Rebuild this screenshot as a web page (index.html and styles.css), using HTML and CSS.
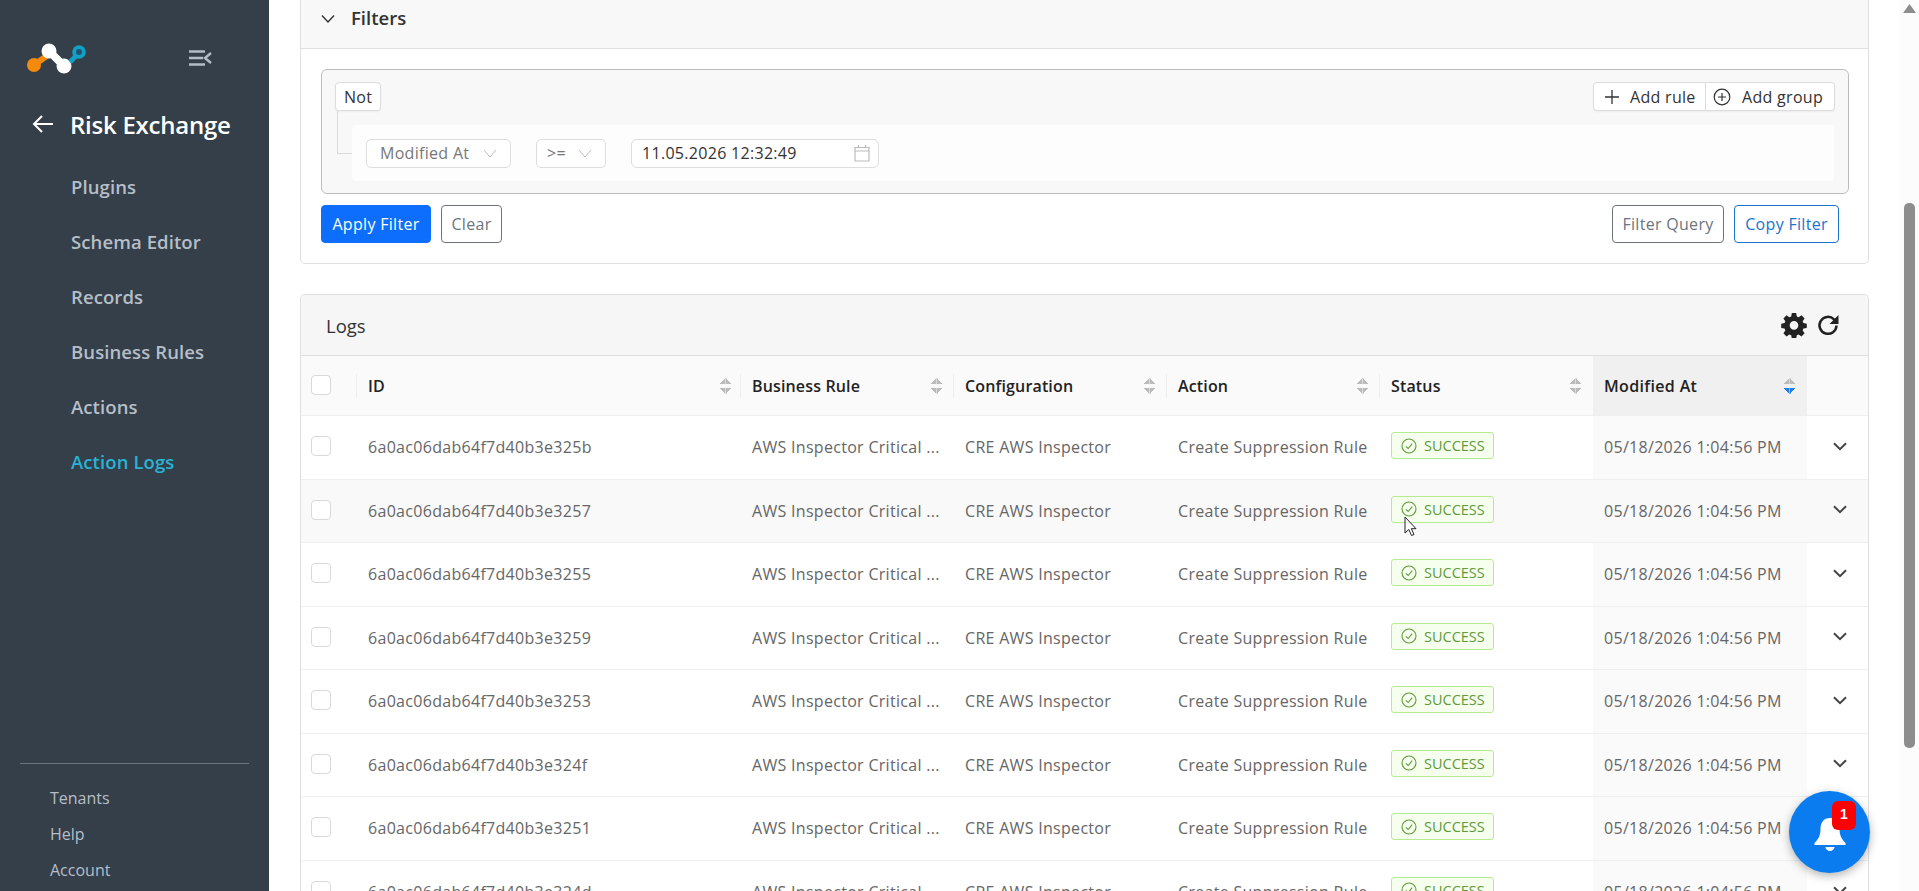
FILE: index.html
```html
<!DOCTYPE html>
<html lang="en">
<head>
<meta charset="utf-8">
<title>Risk Exchange - Action Logs</title>
<link rel="stylesheet" href="styles.css">
</head>
<body>
<div class="app">
  <aside class="sidebar">
    <div class="brand">
      <svg class="logo" width="62" height="36" viewBox="0 0 62 36">
        <path d="M8 25 L22 15" stroke="#f58a0b" stroke-width="6" fill="none"/>
        <circle cx="8" cy="25" r="7" fill="#f58a0b"/>
        <path d="M23 11 L38 26" stroke="#fff" stroke-width="8" fill="none"/>
        <circle cx="23" cy="11" r="7.500" fill="#fff"/>
        <circle cx="38" cy="26" r="7.500" fill="#fff"/>
        <path d="M44 22 L50 16" stroke="#12a0c4" stroke-width="5" fill="none"/>
        <circle cx="53" cy="12" r="6.800" fill="#12a0c4"/>
        <circle cx="53" cy="12" r="3" fill="#1c5474"/>
      </svg>
      <svg class="collapse" width="24" height="18" viewBox="0 0 24 18">
        <path d="M1 2.500H17M1 9H15M1 15.500H17" stroke="#b4bcc6" stroke-width="2.400" fill="none"/>
        <path d="M23 4 L17 9 L23 14" stroke="#b4bcc6" stroke-width="2.400" fill="none"/>
      </svg>
    </div>
    <div class="module">
      <svg width="22" height="20" viewBox="0 0 22 20"><path d="M21 10H2M10 2 L2 10 L10 18" stroke="#fff" stroke-width="2" fill="none"/></svg>
      <span class="module-name">Risk Exchange</span>
    </div>
    <nav class="nav">
      <a class="nav-item">Plugins</a>
      <a class="nav-item">Schema Editor</a>
      <a class="nav-item">Records</a>
      <a class="nav-item">Business Rules</a>
      <a class="nav-item">Actions</a>
      <a class="nav-item active">Action Logs</a>
    </nav>
    <div class="side-foot">
      <a class="foot-item">Tenants</a>
      <a class="foot-item">Help</a>
      <a class="foot-item">Account</a>
    </div>
  </aside>

  <main class="main">
    <section class="card filters">
      <header class="filters-head">
        <svg width="14" height="10" viewBox="0 0 14 10"><path d="M1 1.500 L7 8 L13 1.500" stroke="#333" stroke-width="1.400" fill="none"/></svg>
        <span class="filters-title">Filters</span>
      </header>
      <div class="filters-body">
        <div class="group">
          <div class="group-top">
            <button class="qb-btn">Not</button>
            <div class="qb-actions">
              <button class="qb-btn add-rule">
                <svg width="16" height="16" viewBox="0 0 16 16"><path d="M8 1V15M1 8H15" stroke="#333" stroke-width="1.300"/></svg>Add rule</button>
              <button class="qb-btn add-group">
                <svg width="18" height="18" viewBox="0 0 18 18"><circle cx="9" cy="9" r="7.800" fill="none" stroke="#333" stroke-width="1.200"/><path d="M9 5V13M5 9H13" stroke="#333" stroke-width="1.200"/></svg>Add group</button>
            </div>
          </div>
          <div class="rule">
            <div class="field field-name"><span>Modified At</span><svg width="14" height="9" viewBox="0 0 14 9"><path d="M1 1 L7 8 L13 1" stroke="#bbb" stroke-width="1" fill="none"/></svg></div>
            <div class="field field-op"><span>&gt;=</span><svg width="14" height="9" viewBox="0 0 14 9"><path d="M1 1 L7 8 L13 1" stroke="#bbb" stroke-width="1" fill="none"/></svg></div>
            <div class="field field-date"><span>11.05.2026 12:32:49</span><svg width="16" height="18" viewBox="0 0 16 18"><path d="M1 3.500H15V17H1ZM1 7H15M4.500 1V4M11.500 1V4" stroke="#bbb" stroke-width="1.200" fill="none"/></svg></div>
          </div>
        </div>
        <div class="filter-actions">
          <button class="btn btn-primary">Apply Filter</button>
          <button class="btn btn-clear">Clear</button>
          <span class="spacer"></span>
          <button class="btn btn-query">Filter Query</button>
          <button class="btn btn-copy">Copy Filter</button>
        </div>
      </div>
    </section>

    <section class="card logs">
      <header class="logs-head">
        <span class="logs-title">Logs</span>
        <svg class="gear" width="26" height="26" viewBox="0 0 24 24"><path fill="#222" fill-rule="evenodd" d="M10 1h4l.6 3.100 1.700.7 2.600-1.800 2.900 2.900-1.800 2.600.7 1.700L23.800 10.800v3.900l-3.100.6-.7 1.700 1.800 2.600-2.900 2.900-2.600-1.800-1.700.7-.6 3.100h-4l-.6-3.100-1.700-.7-2.600 1.800-2.900-2.900 1.800-2.600-.7-1.700-3.100-.6v-3.900l3.100-.6.700-1.700-1.800-2.600 2.900-2.900 2.600 1.800 1.700-.7zM12 8.300a4 4 0 1 0 0 8 4 4 0 0 0 0-8z"/></svg>
        <svg class="refresh" width="24" height="24" viewBox="0 0 24 24"><path d="M20.500 12.500a8.500 8.500 0 1 1-2.500-6.200L20.500 9" fill="none" stroke="#222" stroke-width="2.500"/><path d="M22.500 2v9h-9z" fill="#222"/></svg>
      </header>
      <table class="table">
        <colgroup>
          <col class="c-check"><col class="c-id"><col class="c-mid"><col class="c-mid"><col class="c-mid"><col class="c-mid"><col class="c-mod"><col>
        </colgroup>
        <thead>
          <tr>
            <th class="check-cell"><span class="check"></span></th>
            <th class="sep"><div class="th-in">ID<i class="sort"></i></div></th>
            <th class="sep"><div class="th-in">Business Rule<i class="sort"></i></div></th>
            <th class="sep"><div class="th-in">Configuration<i class="sort"></i></div></th>
            <th class="sep"><div class="th-in">Action<i class="sort"></i></div></th>
            <th><div class="th-in">Status<i class="sort"></i></div></th>
            <th class="mod-head"><div class="th-in">Modified At<i class="sort desc"></i></div></th>
            <th></th>
          </tr>
        </thead>
        <tbody>
          <tr><td class="check-cell"><span class="check"></span></td><td>6a0ac06dab64f7d40b3e325b</td><td>AWS Inspector Critical ...</td><td>CRE AWS Inspector</td><td>Create Suppression Rule</td><td><span class="badge"><svg width="16" height="16" viewBox="0 0 16 16"><circle cx="8" cy="8" r="7" fill="none" stroke="#5f9a3a" stroke-width="1.100"/><path d="M4.800 8.300 L7.200 10.500 L11.200 5.700" fill="none" stroke="#5f9a3a" stroke-width="1.100"/></svg>SUCCESS</span></td><td class="mod">05/18/2026 1:04:56 PM</td><td class="exp"><svg class="chev" width="14" height="9" viewBox="0 0 14 9"><path d="M1 1.200 L7 7.200 L13 1.200" stroke="#444" stroke-width="2" fill="none"/></svg></td></tr>
          <tr class="hover"><td class="check-cell"><span class="check"></span></td><td>6a0ac06dab64f7d40b3e3257</td><td>AWS Inspector Critical ...</td><td>CRE AWS Inspector</td><td>Create Suppression Rule</td><td><span class="badge"><svg width="16" height="16" viewBox="0 0 16 16"><circle cx="8" cy="8" r="7" fill="none" stroke="#5f9a3a" stroke-width="1.100"/><path d="M4.800 8.300 L7.200 10.500 L11.200 5.700" fill="none" stroke="#5f9a3a" stroke-width="1.100"/></svg>SUCCESS</span></td><td class="mod">05/18/2026 1:04:56 PM</td><td class="exp"><svg class="chev" width="14" height="9" viewBox="0 0 14 9"><path d="M1 1.200 L7 7.200 L13 1.200" stroke="#444" stroke-width="2" fill="none"/></svg></td></tr>
          <tr><td class="check-cell"><span class="check"></span></td><td>6a0ac06dab64f7d40b3e3255</td><td>AWS Inspector Critical ...</td><td>CRE AWS Inspector</td><td>Create Suppression Rule</td><td><span class="badge"><svg width="16" height="16" viewBox="0 0 16 16"><circle cx="8" cy="8" r="7" fill="none" stroke="#5f9a3a" stroke-width="1.100"/><path d="M4.800 8.300 L7.200 10.500 L11.200 5.700" fill="none" stroke="#5f9a3a" stroke-width="1.100"/></svg>SUCCESS</span></td><td class="mod">05/18/2026 1:04:56 PM</td><td class="exp"><svg class="chev" width="14" height="9" viewBox="0 0 14 9"><path d="M1 1.200 L7 7.200 L13 1.200" stroke="#444" stroke-width="2" fill="none"/></svg></td></tr>
          <tr><td class="check-cell"><span class="check"></span></td><td>6a0ac06dab64f7d40b3e3259</td><td>AWS Inspector Critical ...</td><td>CRE AWS Inspector</td><td>Create Suppression Rule</td><td><span class="badge"><svg width="16" height="16" viewBox="0 0 16 16"><circle cx="8" cy="8" r="7" fill="none" stroke="#5f9a3a" stroke-width="1.100"/><path d="M4.800 8.300 L7.200 10.500 L11.200 5.700" fill="none" stroke="#5f9a3a" stroke-width="1.100"/></svg>SUCCESS</span></td><td class="mod">05/18/2026 1:04:56 PM</td><td class="exp"><svg class="chev" width="14" height="9" viewBox="0 0 14 9"><path d="M1 1.200 L7 7.200 L13 1.200" stroke="#444" stroke-width="2" fill="none"/></svg></td></tr>
          <tr><td class="check-cell"><span class="check"></span></td><td>6a0ac06dab64f7d40b3e3253</td><td>AWS Inspector Critical ...</td><td>CRE AWS Inspector</td><td>Create Suppression Rule</td><td><span class="badge"><svg width="16" height="16" viewBox="0 0 16 16"><circle cx="8" cy="8" r="7" fill="none" stroke="#5f9a3a" stroke-width="1.100"/><path d="M4.800 8.300 L7.200 10.500 L11.200 5.700" fill="none" stroke="#5f9a3a" stroke-width="1.100"/></svg>SUCCESS</span></td><td class="mod">05/18/2026 1:04:56 PM</td><td class="exp"><svg class="chev" width="14" height="9" viewBox="0 0 14 9"><path d="M1 1.200 L7 7.200 L13 1.200" stroke="#444" stroke-width="2" fill="none"/></svg></td></tr>
          <tr><td class="check-cell"><span class="check"></span></td><td>6a0ac06dab64f7d40b3e324f</td><td>AWS Inspector Critical ...</td><td>CRE AWS Inspector</td><td>Create Suppression Rule</td><td><span class="badge"><svg width="16" height="16" viewBox="0 0 16 16"><circle cx="8" cy="8" r="7" fill="none" stroke="#5f9a3a" stroke-width="1.100"/><path d="M4.800 8.300 L7.200 10.500 L11.200 5.700" fill="none" stroke="#5f9a3a" stroke-width="1.100"/></svg>SUCCESS</span></td><td class="mod">05/18/2026 1:04:56 PM</td><td class="exp"><svg class="chev" width="14" height="9" viewBox="0 0 14 9"><path d="M1 1.200 L7 7.200 L13 1.200" stroke="#444" stroke-width="2" fill="none"/></svg></td></tr>
          <tr><td class="check-cell"><span class="check"></span></td><td>6a0ac06dab64f7d40b3e3251</td><td>AWS Inspector Critical ...</td><td>CRE AWS Inspector</td><td>Create Suppression Rule</td><td><span class="badge"><svg width="16" height="16" viewBox="0 0 16 16"><circle cx="8" cy="8" r="7" fill="none" stroke="#5f9a3a" stroke-width="1.100"/><path d="M4.800 8.300 L7.200 10.500 L11.200 5.700" fill="none" stroke="#5f9a3a" stroke-width="1.100"/></svg>SUCCESS</span></td><td class="mod">05/18/2026 1:04:56 PM</td><td class="exp"><svg class="chev" width="14" height="9" viewBox="0 0 14 9"><path d="M1 1.200 L7 7.200 L13 1.200" stroke="#444" stroke-width="2" fill="none"/></svg></td></tr>
          <tr><td class="check-cell"><span class="check"></span></td><td>6a0ac06dab64f7d40b3e324d</td><td>AWS Inspector Critical ...</td><td>CRE AWS Inspector</td><td>Create Suppression Rule</td><td><span class="badge"><svg width="16" height="16" viewBox="0 0 16 16"><circle cx="8" cy="8" r="7" fill="none" stroke="#5f9a3a" stroke-width="1.100"/><path d="M4.800 8.300 L7.200 10.500 L11.200 5.700" fill="none" stroke="#5f9a3a" stroke-width="1.100"/></svg>SUCCESS</span></td><td class="mod">05/18/2026 1:04:56 PM</td><td class="exp"><svg class="chev" width="14" height="9" viewBox="0 0 14 9"><path d="M1 1.200 L7 7.200 L13 1.200" stroke="#444" stroke-width="2" fill="none"/></svg></td></tr>
        </tbody>
      </table>
    </section>
  </main>

  <div class="scrollbar">
    <svg class="sb-arrow" width="13" height="9" viewBox="0 0 13 9"><path d="M6.500 0 L13 9 H0Z" fill="#8d8d8d"/></svg>
    <div class="sb-thumb"></div>
  </div>
</div>

<button class="fab">
  <svg width="34" height="36" viewBox="0 0 34 36"><path fill="#fff" d="M17 2c-6.500 0-9.500 5-9.500 10.500 0 7-2 10.500-6 14.500v2h31v-2c-4-4-6-7.500-6-14.500C26.500 7 23.500 2 17 2zM12.500 31a4.500 4 0 0 0 9 0z"/></svg>
  <span class="fab-badge">1</span>
</button>
<svg class="cursor" width="13" height="21" viewBox="0 0 13 21"><path d="M1 1V17L4.800 13.500L7.500 19.500L10 18.500L7.300 12.700H12Z" fill="#fff" stroke="#222" stroke-width="1"/></svg>
</body>
</html>
```
FILE: styles.css
```css
* { box-sizing: border-box; }
html, body { margin: 0; height: 891px; overflow: hidden; background: #fff; }
body { font-family: "Open Sans", "Noto Sans", sans-serif; font-size: 16px; letter-spacing: 0.3px; color: #333; position: relative; }
button { font: inherit; letter-spacing: inherit; cursor: pointer; }

.app { display: flex; height: 891px; overflow: hidden; }

/* sidebar */
.sidebar { width: 269px; flex: none; background: #343f49; display: flex; flex-direction: column; color: #b6bec8; }
.brand { display: flex; align-items: center; justify-content: space-between; padding: 40px 57px 0 26px; height: 76px; }
.module { display: flex; align-items: center; gap: 16px; padding: 22px 0 0 32px; height: 52px; box-sizing: content-box; }
.module-name { font-size: 24px; font-weight: 600; color: #fff; letter-spacing: -0.25px; }
.nav { display: flex; flex-direction: column; padding: 9px 0 0 71px; }
.nav-item { height: 55px; line-height: 55px; font-size: 18.500px; font-weight: 600; letter-spacing: 0.1px; }
.nav-item.active { color: #29b3d4; }
.side-foot { margin: auto 20px 0; border-top: 1px solid #6c757e; padding: 16px 0 4px 30px; display: flex; flex-direction: column; height: 128px; }
.foot-item { height: 36px; line-height: 36px; font-size: 16px; letter-spacing: 0; }

/* main */
.main { flex: 1; min-width: 0; padding: 0 31px 0 31px; display: flex; flex-direction: column; gap: 30px; }
.card { border: 1px solid #dfdfdf; border-radius: 5px; }
.filters { border-top: 0; border-radius: 0 0 5px 5px; height: 264px; flex: none; }
.filters-head { height: 49px; background: #f8f8f8; border-bottom: 1px solid #dfdfdf; display: flex; align-items: flex-start; padding: 7px 0 0 20px; gap: 16px; }
.filters-head svg { margin-top: 7px; }
.filters-title { font-size: 18.500px; font-weight: 600; line-height: 22px; letter-spacing: 0; }
.filters-body { padding: 20px 19px 0 20px; }
.group { position: relative; height: 125px; border: 1px solid #bcbcbc; border-radius: 6px; background: #f8f8f8; padding: 12px 13px 0 13px; }
.group::before { content: ""; position: absolute; left: 15px; top: 41px; width: 16px; height: 42px; border: 1px solid #d9d9d9; border-top: 0; border-right: 0; }
.group-top { display: flex; justify-content: space-between; }
.qb-btn { height: 29px; background: #fff; border: 1px solid #ddd; border-radius: 4px; color: #333; padding: 0 8px; display: flex; align-items: center; box-shadow: 0 1px 2px rgba(0,0,0,.05); }
.qb-actions { display: flex; }
.add-rule { width: 113px; border-radius: 4px 0 0 4px; gap: 10px; padding-left: 10px; white-space: nowrap; }
.add-group { width: 129px; border-left: 0; border-radius: 0 4px 4px 0; gap: 11px; padding-left: 7px; white-space: nowrap; }
.rule { position: relative; margin: 14px 1px 0 17px; height: 56px; background: #fdfdfd; border-radius: 4px; display: flex; align-items: center; gap: 25px; padding-left: 14px; }
.field { height: 29px; background: #fff; border: 1px solid #ddd; border-radius: 5px; display: flex; align-items: center; justify-content: space-between; color: #777; padding: 0 13px 0 13px; white-space: nowrap; }
.field-name { width: 145px; }
.field-op { width: 70px; padding-left: 10px; }
.field-date { width: 248px; color: #333; padding: 0 8px 0 10px; border-radius: 6px; }
.filter-actions { display: flex; align-items: center; margin-top: 11px; padding-right: 10px; gap: 10px; }
.spacer { flex: 1; }
.btn { height: 38px; border-radius: 4px; background: #fff; padding: 0; white-space: nowrap; }
.btn-primary { width: 110px; background: #0d6efd; border: 1px solid #0d6efd; color: #fff; }
.btn-clear { width: 61px; border: 1px solid #6c757d; color: #6c757d; }
.btn-query { width: 112px; border: 1px solid #6c757d; color: #6c757d; }
.btn-copy { width: 105px; border: 1px solid #1a73d0; color: #1a73d0; }

.logs { flex: none; border-bottom: 0; border-radius: 5px 5px 0 0; }
.logs-head { height: 61px; background: #f6f6f6; border-bottom: 1px solid #dfdfdf; display: flex; align-items: center; padding: 0 28px 0 25px; border-radius: 5px 5px 0 0; }
.logs-title { flex: 1; font-size: 18.500px; font-weight: 500; letter-spacing: 0; }
.gear { margin-right: 9px; }

.table { width: 100%; border-collapse: collapse; table-layout: fixed; }
.c-check { width: 56px; }
.c-id { width: 384px; }
.c-mid { width: 213px; }
.c-mod { width: 214px; }
th { height: 59.500px; background: #fafafa; text-align: left; font-weight: 600; color: #222; padding: 0 12px 0 11px; position: relative; letter-spacing: 0.15px; border-bottom: 1px solid #efefef; }
th:nth-child(2) { padding-right: 10px; }
th.sep::after { content: ""; position: absolute; right: 0; top: 18px; height: 24px; width: 1px; background: #efefef; }
th.check-cell::after { content: ""; position: absolute; right: 0; top: 18px; height: 24px; width: 1px; background: #efefef; }
.mod-head { background: #f0f0f0; letter-spacing: 0.35px; }
.th-in { display: flex; justify-content: space-between; align-items: center; }
.sort { display: block; width: 11px; height: 16px; margin-right: 0; background:
  linear-gradient(to bottom right, transparent 49%, #bbb 50%) 0 0 / 5.5px 6px no-repeat,
  linear-gradient(to bottom left, transparent 49%, #bbb 50%) 5.5px 0 / 5.5px 6px no-repeat,
  linear-gradient(to top right, transparent 49%, #bbb 50%) 0 10px / 5.5px 6px no-repeat,
  linear-gradient(to top left, transparent 49%, #bbb 50%) 5.5px 10px / 5.5px 6px no-repeat; }
.sort.desc { background:
  linear-gradient(to bottom right, transparent 49%, #bbb 50%) 0 0 / 5.5px 6px no-repeat,
  linear-gradient(to bottom left, transparent 49%, #bbb 50%) 5.5px 0 / 5.5px 6px no-repeat,
  linear-gradient(to top right, transparent 49%, #1f7fe8 50%) 0 10px / 5.5px 6px no-repeat,
  linear-gradient(to top left, transparent 49%, #1f7fe8 50%) 5.5px 10px / 5.5px 6px no-repeat; }
td { height: 63.500px; padding: 0 0 0 11px; color: #666; border-bottom: 1px solid #efefef; white-space: nowrap; overflow: hidden; }
tr.hover td { background: #f9f9f9; }
td.mod { background: #fafafa; }
td.exp { text-align: center; padding: 0 0 0 5px; }
.chev { display: block; margin: -2px auto 0; }
.check-cell { padding: 0 0 0 10px; }
.check { display: block; width: 20px; height: 20px; margin-top: -2px; background: #fff; border: 1px solid #d9d9d9; border-radius: 4px; }
.badge { display: inline-flex; align-items: center; gap: 7px; width: 103px; height: 27px; padding-left: 9px; margin-top: -3px; font-size: 14.500px; letter-spacing: 0; color: #5f9a3a; background: #f6ffed; border: 1px solid #b7eb8f; border-radius: 3px; }

/* scrollbar */
.scrollbar { width: 19px; flex: none; background: #fcfcfc; padding-top: 4px; display: flex; flex-direction: column; align-items: center; }
.sb-arrow { flex: none; }
.sb-thumb { width: 11px; height: 545px; margin-top: 190px; background: #8d8d8d; border-radius: 5px; }

/* floating */
.fab { position: absolute; left: 1789px; top: 791px; width: 81px; height: 82px; border: 0; border-radius: 50%; background: #0a7cf0; box-shadow: 0 3px 10px rgba(0,0,0,.3); padding: 8px 0 0 0; }
.fab-badge { position: absolute; left: 43px; top: 10px; width: 24px; height: 29px; background: #f00; color: #fff; font-family: "Liberation Sans", sans-serif; font-weight: 700; font-size: 14px; line-height: 27px; border-radius: 6px; text-align: center; }
.cursor { position: absolute; left: 1404px; top: 516px; }
```
